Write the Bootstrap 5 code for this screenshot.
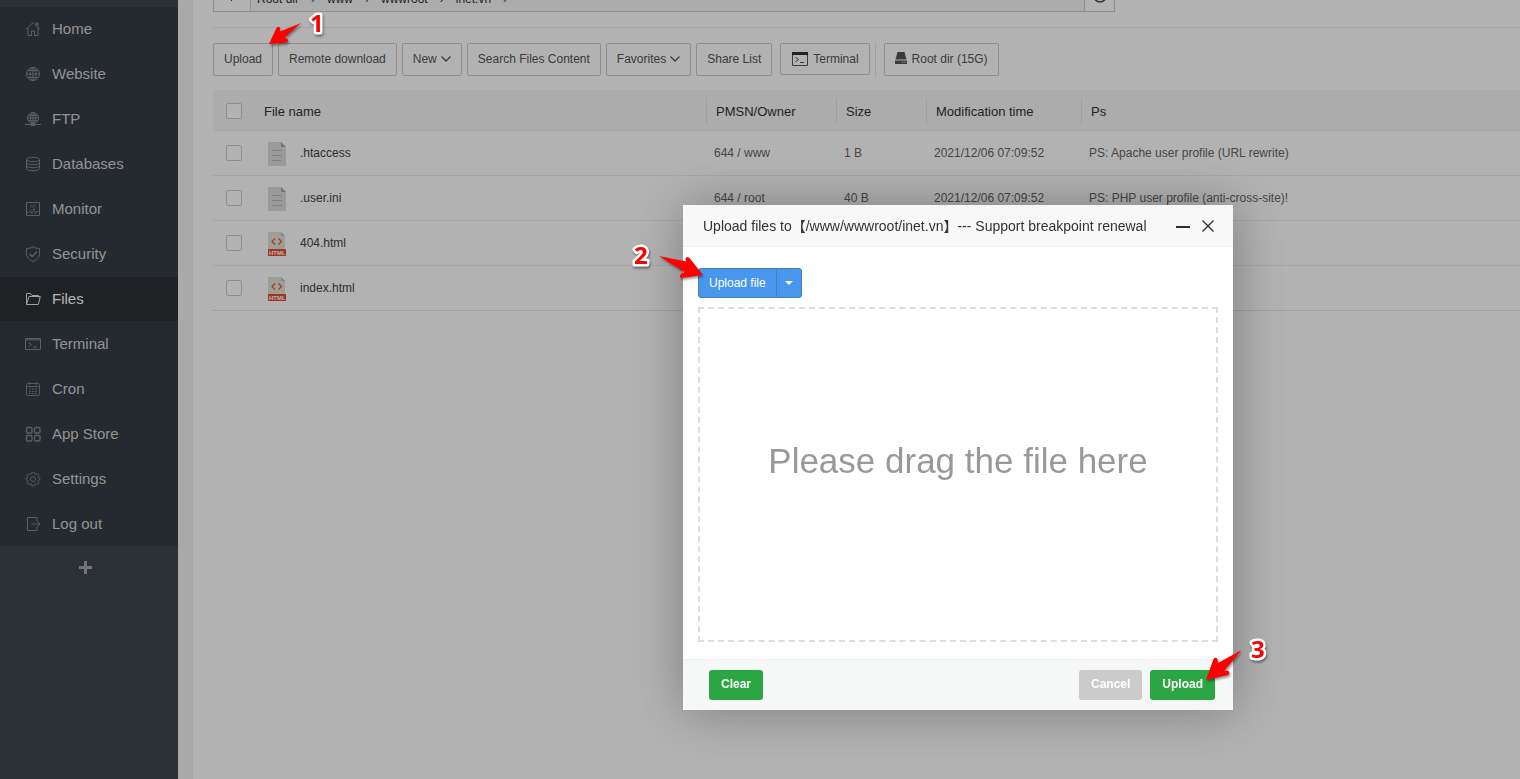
<!DOCTYPE html>
<html lang="en">
<head>
<meta charset="utf-8">
<meta name="viewport" content="width=device-width, initial-scale=1">
<title>Files</title>
<link href="https://cdn.jsdelivr.net/npm/bootstrap@5.3.0/dist/css/bootstrap.min.css" rel="stylesheet">
<style>
body{font-family:"Liberation Sans","Noto Sans CJK SC",sans-serif;font-size:12px;line-height:18px;color:#555;background:#fff;overflow:hidden}
svg{display:block;flex:none}
.ic{fill:none;stroke:currentColor;stroke-width:1}
.side{width:178px;background:#404550;padding-top:7px}
.side ul{background:#363d46}
.side li{height:45px}
.side li:last-child{height:44px}
.side a{height:44px;padding-left:25px;gap:11px;font-size:15px;line-height:20px;color:#d2d2d2;text-decoration:none}
.side a svg{color:#85888c}
.side a.active{background:#2d3136;color:#fff}
.side a.active svg{color:#e6e6e6}
.addbtn{height:42px;width:170px;background:none;border:0;color:#a5a5a5}
.workspace{background:#f3f3f3;padding-left:15px}
.panel{background:#fff;padding-left:20px}
.pathbar{width:902px;height:32px;margin-top:-20px;border:1px solid #ccc;background:#f6f6f6}
.pathbar button{background:#fff;border:0;padding:0;color:#444}
.pathbar .back{width:37px;border-right:1px solid #ccc}
.pathbar .reload{width:30px;border-left:1px solid #ccc}
.pathbar ol{padding:6px 0 0 6px;gap:12px;color:#444;font-size:12px}
.pathbar a{color:#333;text-decoration:none}
.rule{height:1px;background:#eee;margin-top:15px}
.tools{margin-top:15px;gap:5px;height:33px}
.tbtn{height:33px;padding:0 10px 2px;border:1px solid #ccc;border-radius:2px;background:#fff;color:#555;font-size:12px;line-height:18px;white-space:nowrap;display:flex;align-items:center;gap:4px}
.tbtn.term{height:32px;padding:0 10px 1px 11px;margin-left:3px;gap:5px}
.tbtn.disk{margin-left:3px;gap:5px}
.vsep{width:1px;height:33px;background:#e4e4e4}
.files{margin-top:14px;width:100%;table-layout:fixed;border-collapse:separate;border-spacing:0}
.files th{height:41px;background:#f6f6f6;border-bottom:1px solid #ececec;font-size:13px;font-weight:400;color:#333;padding:1px 0 0}
.files th span{display:block;height:26px;line-height:27px;padding-left:9px;border-left:1px solid #e4e4e4}
.files th.plain span{border:0;padding-left:10px}
.files td{height:45px;border-bottom:1px solid #eee;padding:0 0 0 8px;color:#666}
.files td.fname{color:#444;padding-left:13px}
.files td.ftype{padding:2px 0 0 14px}
.files tr:last-child td{border-color:#e4e4e4}
.files .pick{padding-left:13px}
.files input{appearance:none;display:block;width:16px;height:16px;border:1px solid #ccc;border-radius:2px;margin:0;background:#fff}
.shade{position:fixed;inset:0;background:rgba(0,0,0,.3);pointer-events:none}
.dialog{position:absolute;left:683px;top:205px;width:550px;background:#fff;border-radius:2px;box-shadow:1px 1px 50px rgba(0,0,0,.3);color:#333}
.dialog header{height:42px;background:#f8f8f8;border-bottom:1px solid #eee;padding:0 18px 0 20px}
.dialog h1{font-size:14px;line-height:20px;font-weight:400;margin:0}
.dialog header div{gap:11px}
.dialog header button{background:none;border:0;padding:0;color:#2e2d3c}
.content{padding:21px 15px 17px}
.bluebtn{height:30px;background:#4897ec;border:1px solid #3d81b8;border-radius:3px 0 0 3px;color:#fff;font-size:12px;line-height:18px;padding:0 10px}
.bluebtn.split{width:26px;padding:0;margin-left:-1px;border-radius:0 3px 3px 0}
.drop{height:335px;margin-top:9px;border:2px dashed #ddd;color:#999;font-size:35px;line-height:44px;padding-bottom:28px}
.dialog footer{height:51px;background:#f6f8f7;border-top:1px solid #edf0ef;padding:0 18px 1px 26px;gap:8px}
.act{height:30px;border:0;border-radius:3px;background:#2ca543;color:#fff;font-size:12px;line-height:18px;font-weight:700;padding:0 12px 2px}
.act.off{background:#cbcbcb}
.note{position:absolute;pointer-events:none;overflow:visible;filter:drop-shadow(1px 2px 1px rgba(0,0,0,.4))}
.note text{font-family:"Open Sans","Noto Sans",sans-serif;font-weight:700;font-size:24px;fill:#f00;stroke:#fff;stroke-width:5;stroke-linejoin:round;paint-order:stroke}
.note.one{left:266px;top:10px}
.note.two{left:630px;top:240px}
.note.three{left:1203px;top:636px}
</style>
</head>
<body>
<div class="d-flex vh-100">
<nav class="side flex-shrink-0" aria-label="Main">
<ul class="list-unstyled m-0">
<li><a href="#" class="d-flex align-items-center"><svg class="ic" width="16" height="16"><path d="M1 8.500 8 1.500l7 7M3 7v7.500h3.500V10h3v4.500H13V7M11.500 4V2H13v3.500"/></svg>Home</a></li>
<li><a href="#" class="d-flex align-items-center"><svg class="ic" width="16" height="16"><circle cx="8" cy="8" r="6.500"/><ellipse cx="8" cy="8" rx="3" ry="6.500"/><path d="M8 1.500v13M1.500 8h13M2.500 4.500h11M2.500 11.500h11"/></svg>Website</a></li>
<li><a href="#" class="d-flex align-items-center"><svg class="ic" width="16" height="16"><circle cx="8" cy="7" r="5.500"/><ellipse cx="8" cy="7" rx="2.500" ry="5.500"/><path d="M8 1.500v11M2.500 7h11M3.500 4.500h9M3.500 9.500h9M0 13.500h16"/><path d="M6 13.500h4" stroke-width="3"/></svg>FTP</a></li>
<li><a href="#" class="d-flex align-items-center"><svg class="ic" width="16" height="16"><ellipse cx="8" cy="3.500" rx="6.500" ry="2.200"/><path d="M1.500 3.500v9c0 3 13 3 13 0v-9M1.500 6.500c0 3 13 3 13 0M1.500 9.500c0 3 13 3 13 0"/></svg>Databases</a></li>
<li><a href="#" class="d-flex align-items-center"><svg class="ic" width="16" height="16"><path d="M1.500 1.500h13v13h-13z"/><path d="M2 11.500h2l1.500-2 1.500 3 2-5 1.500 5 1-2h2.500" opacity=".8"/><path d="M5 4.500h6M5 6h5" opacity=".5"/></svg>Monitor</a></li>
<li><a href="#" class="d-flex align-items-center"><svg class="ic" width="16" height="16"><path d="M8 .7c2 1.300 4 1.800 6.500 1.800v5c0 4-3 6.500-6.500 8-3.500-1.500-6.500-4-6.500-8v-5C4 2.500 6 2 8 .7z"/><path d="m4.500 8 2.700 2.500L12 5.500" stroke-width="1.300"/></svg>Security</a></li>
<li><a href="#" class="d-flex align-items-center active" aria-current="page"><svg class="ic" width="16" height="16"><path d="M1.500 13.500v-11h4l1.500 2h6.500v2M1.500 13.500l2.500-8h11.300l-2 8z" stroke-linejoin="round"/></svg>Files</a></li>
<li><a href="#" class="d-flex align-items-center"><svg class="ic" width="16" height="16"><path d="M.5 2.500h15v11H.500zM3.500 6.500l3 2-3 2.500M8 11h4"/><path d="M1 3.500h14" stroke-width="2" opacity=".7"/></svg>Terminal</a></li>
<li><a href="#" class="d-flex align-items-center"><svg class="ic" width="16" height="16" opacity=".85"><rect x="1.500" y="2.500" width="13" height="12" rx="1"/><path d="M1.500 5.500h13M4.500 1v3M11.500 1v3"/><path d="M4 8h8M4 10.500h8M4 12.500h8" stroke-dasharray="2 1"/></svg>Cron</a></li>
<li><a href="#" class="d-flex align-items-center"><svg class="ic" width="16" height="16"><g stroke-width="1.300"><rect x="1.500" y="1.500" width="5.500" height="5.500" rx="1"/><rect x="9.500" y="1.500" width="5.500" height="5.500" rx="1"/><rect x="1.500" y="9.500" width="5.500" height="5.500" rx="1"/><rect x="9.500" y="9.500" width="5.500" height="5.500" rx="1"/></g></svg>App Store</a></li>
<li><a href="#" class="d-flex align-items-center"><svg class="ic" width="16" height="16" opacity=".85"><circle cx="8" cy="8" r="2.500"/><path d="m6.800 1.300-.5 1.900-1 .4-1.700-1-1.600 1.700 1 1.600-.4 1-1.500.4v1.500l1.500.5.4 1-1 1.600 1.600 1.700 1.700-1 1 .4.500 1.800h2.400l.5-1.800 1-.4 1.700 1 1.600-1.700-1-1.600.4-1 1.500-.5V7.300l-1.500-.4-.4-1 1-1.600-1.600-1.700-1.700 1-1-.4-.5-1.900z"/></svg>Settings</a></li>
<li><a href="#" class="d-flex align-items-center"><svg class="ic" width="16" height="16"><path d="M12 5V1.500H2.500v13H12V11M6.500 8h8M12.500 5.500 15 8l-2.500 2.500"/></svg>Log out</a></li>
</ul>
<button class="addbtn d-flex align-items-center justify-content-center" aria-label="Add menu entry"><svg width="13" height="13"><path d="M6.500 0v13M0 6.500h13" stroke="currentColor" stroke-width="3"/></svg></button>
</nav>
<main class="workspace d-flex flex-grow-1">
<div class="panel flex-grow-1">
<div class="pathbar d-flex">
<button class="back d-flex justify-content-center align-items-center" aria-label="Back"><svg class="ic" width="12" height="12"><path d="M11 6H1M6 1 1 6l5 5"/></svg></button>
<ol class="list-unstyled d-flex flex-grow-1 align-items-center m-0"><li><a href="#">Root dir</a></li><li>›</li><li><a href="#">www</a></li><li>›</li><li><a href="#">wwwroot</a></li><li>›</li><li><a href="#">inet.vn</a></li><li>›</li></ol>
<button class="reload d-flex justify-content-center align-items-center" aria-label="Refresh"><svg class="ic" width="14" height="14"><path d="M12 3.500A6 6 0 1 0 13 7M12.500 0v4h-4" stroke-width="1.500"/></svg></button>
</div>
<div class="rule"></div>
<div class="tools d-flex">
<button class="tbtn">Upload</button><button class="tbtn">Remote download</button>
<button class="tbtn">New <svg class="ic" width="10" height="8"><path d="m.5 1.500 4.500 4.500L9.500 1.500" stroke-width="1.300"/></svg></button>
<button class="tbtn">Search Files Content</button>
<button class="tbtn">Favorites <svg class="ic" width="10" height="8"><path d="m.5 1.500 4.500 4.500L9.500 1.500" stroke-width="1.300"/></svg></button>
<button class="tbtn">Share List</button>
<button class="tbtn term"><svg class="ic" width="16" height="14"><path d="M.5.5h15v13H.500zM3.500 5.500l3 2-3 2.500M8 10.500h4"/><path d="M0 1.500h16" stroke-width="3" stroke="#333"/></svg>Terminal</button>
<span class="vsep"></span>
<button class="tbtn disk"><svg width="12" height="14" fill="#555"><path d="M2.500 0h7L11.500 7.500H.500zM0 8.500h12V12H0z"/><path d="M7 10.300h1.200M9.500 10.300h1.200" stroke="#ddd"/></svg>Root dir (15G)</button>
</div>
<table class="files">
<colgroup><col style="width:41px"><col style="width:33px"><col style="width:419px"><col style="width:130px"><col style="width:90px"><col style="width:155px"><col></colgroup>
<thead><tr><th class="pick"><input type="checkbox" aria-label="Select all"></th><th class="plain" colspan="2"><span>File name</span></th><th><span>PMSN/Owner</span></th><th><span>Size</span></th><th><span>Modification time</span></th><th><span>Ps</span></th></tr></thead>
<tbody>
<tr><td class="pick"><input type="checkbox" aria-label="Select .htaccess"></td><td class="ftype"><svg width="18" height="24"><path fill="#ddd" d="M0 0h13l5 5v19H0z"/><path fill="#aaa" d="M13 0v5h5z"/><path d="M4 8.500h10M4 13.500h10M4 18.500h10" stroke="#bbb"/></svg></td><td class="fname">.htaccess</td><td>644 / www</td><td>1 B</td><td>2021/12/06 07:09:52</td><td>PS: Apache user profile (URL rewrite)</td></tr>
<tr><td class="pick"><input type="checkbox" aria-label="Select .user.ini"></td><td class="ftype"><svg width="18" height="24"><path fill="#ddd" d="M0 0h13l5 5v19H0z"/><path fill="#aaa" d="M13 0v5h5z"/><path d="M4 8.500h10M4 13.500h10M4 18.500h10" stroke="#bbb"/></svg></td><td class="fname">.user.ini</td><td>644 / root</td><td>40 B</td><td>2021/12/06 07:09:52</td><td>PS: PHP user profile (anti-cross-site)!</td></tr>
<tr><td class="pick"><input type="checkbox" aria-label="Select 404.html"></td><td class="ftype"><svg width="18" height="24"><path fill="#e2e3d8" d="M0 0h13l4 4v13H0z"/><path fill="#bfc0b6" d="M13 0v4h4z"/><path d="M7 6.500 4 9.500l3 3M10.500 6.500l3 3-3 3" fill="none" stroke="#e95a3c" stroke-width="1.300"/><path fill="#e24f32" d="M0 17h18v7H0z"/><text x="1" y="23" font-size="6" font-weight="700" fill="#fff">HTML</text></svg></td><td class="fname">404.html</td><td></td><td></td><td></td><td></td></tr>
<tr><td class="pick"><input type="checkbox" aria-label="Select index.html"></td><td class="ftype"><svg width="18" height="24"><path fill="#e2e3d8" d="M0 0h13l4 4v13H0z"/><path fill="#bfc0b6" d="M13 0v4h4z"/><path d="M7 6.500 4 9.500l3 3M10.500 6.500l3 3-3 3" fill="none" stroke="#e95a3c" stroke-width="1.300"/><path fill="#e24f32" d="M0 17h18v7H0z"/><text x="1" y="23" font-size="6" font-weight="700" fill="#fff">HTML</text></svg></td><td class="fname">index.html</td><td></td><td></td><td></td><td></td></tr>
</tbody>
</table>
</div>
</main>
</div>
<div class="shade"></div>
<section class="dialog" role="dialog" aria-labelledby="dialogTitle">
<header class="d-flex align-items-center"><h1 id="dialogTitle" class="me-auto">Upload files to【/www/wwwroot/inet.vn】--- Support breakpoint renewal</h1>
<div class="d-flex"><button aria-label="Minimize"><svg width="14" height="14"><path d="M0 8h14" stroke="currentColor" stroke-width="2"/></svg></button><button aria-label="Close"><svg width="14" height="14"><path d="m1.500 1.500 11 11m0-11-11 11" stroke="currentColor" stroke-width="1.400"/></svg></button></div></header>
<div class="content">
<div class="d-flex"><button class="bluebtn">Upload file</button><button class="bluebtn split d-flex align-items-center justify-content-center" aria-label="More upload options"><svg width="8" height="4"><path d="M0 0h8L4 4z" fill="#fff"/></svg></button></div>
<div class="drop d-flex align-items-center justify-content-center">Please drag the file here</div>
</div>
<footer class="d-flex align-items-center"><button class="act me-auto">Clear</button><button class="act off">Cancel</button><button class="act">Upload</button></footer>
</section>
<svg class="note one" width="64" height="38"><path fill="#f00" d="M35 13 18.500 27.500l3 1.500q1.500 2-1 3.500L3 34l7.500-16q2-2.500 3.500 0v3.500z"/><text x="44" y="22">1</text></svg>
<svg class="note two" width="76" height="40"><path fill="#f00" d="M29 16 56 21.500l-.5-3q1-2.500 3.500-1L73 35l-21.500 3q-2.500-1-1-3.500l4-2.500z"/><text x="4" y="24">2</text></svg>
<svg class="note three" width="70" height="48"><path fill="#f00" d="M38.500 14 21.500 34.500l4 .5q2 2-.5 4L3 44l7.500-21q2-2.500 4 0l.5 4z"/><text x="48" y="22">3</text></svg>
<script src="https://cdn.jsdelivr.net/npm/bootstrap@5.3.0/dist/js/bootstrap.bundle.min.js"></script>
</body>
</html>
